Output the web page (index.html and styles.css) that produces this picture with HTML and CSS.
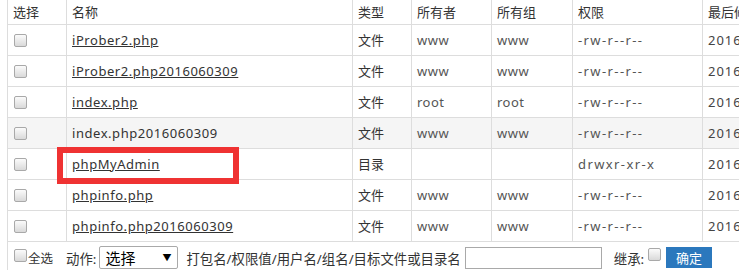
FILE: index.html
```html
<!DOCTYPE html>
<html lang="zh-CN">
<head>
<meta charset="utf-8">
<title>文件列表</title>
<link rel="stylesheet" href="styles.css">
</head>
<body>
<div class="wrap">
<table class="files">
  <colgroup>
    <col class="c-sel"><col class="c-name"><col class="c-type"><col class="c-owner"><col class="c-group"><col class="c-perm"><col class="c-time">
  </colgroup>
  <thead>
    <tr><th>选择</th><th>名称</th><th>类型</th><th>所有者</th><th>所有组</th><th>权限</th><th>最后修改时间</th></tr>
  </thead>
  <tbody>
    <tr><td><input type="checkbox" class="cb"></td><td><a href="#" class="fn">iProber2.php</a></td><td>文件</td><td class="usr">www</td><td class="usr">www</td><td class="perm">-rw-r--r--</td><td class="num">2016-06-03</td></tr>
    <tr><td><input type="checkbox" class="cb"></td><td><a href="#" class="fn">iProber2.php2016060309</a></td><td>文件</td><td class="usr">www</td><td class="usr">www</td><td class="perm">-rw-r--r--</td><td class="num">2016-06-03</td></tr>
    <tr><td><input type="checkbox" class="cb"></td><td><a href="#" class="fn">index.php</a></td><td>文件</td><td class="usr">root</td><td class="usr">root</td><td class="perm">-rw-r--r--</td><td class="num">2016-06-03</td></tr>
    <tr class="hover"><td><input type="checkbox" class="cb"></td><td><span class="fn plain">index.php2016060309</span></td><td>文件</td><td class="usr">www</td><td class="usr">www</td><td class="perm">-rw-r--r--</td><td class="num">2016-06-03</td></tr>
    <tr><td><input type="checkbox" class="cb"></td><td class="mark-cell"><a href="#" class="fn">phpMyAdmin</a><span class="mark"></span></td><td>目录</td><td class="usr"></td><td class="usr"></td><td class="perm">drwxr-xr-x</td><td class="num">2016-06-03</td></tr>
    <tr><td><input type="checkbox" class="cb"></td><td><a href="#" class="fn">phpinfo.php</a></td><td>文件</td><td class="usr">www</td><td class="usr">www</td><td class="perm">-rw-r--r--</td><td class="num">2016-06-03</td></tr>
    <tr><td><input type="checkbox" class="cb"></td><td><a href="#" class="fn">phpinfo.php2016060309</a></td><td>文件</td><td class="usr">www</td><td class="usr">www</td><td class="perm">-rw-r--r--</td><td class="num">2016-06-03</td></tr>
  </tbody>
  <tfoot>
    <tr>
      <td colspan="7" class="foot">
        <div class="actions">
          <label class="all"><input type="checkbox" class="cb">全选</label>
          <span class="act-label">动作:</span>
          <span class="sel-wrap"><select class="sel"><option>选择</option></select></span>
          <span class="hint">打包名/权限值/用户名/组名/目标文件或目录名</span>
          <input type="text" class="txt">
          <span class="inherit">继承:</span>
          <input type="checkbox" class="cb">
          <button class="btn" type="button">确定</button>
        </div>
      </td>
    </tr>
  </tfoot>
</table>
</div>
</body>
</html>
```

FILE: styles.css
```css
html, body {
  margin: 0;
  padding: 0;
  background: #fff;
  overflow: hidden;
}
body {
  font-family: "Noto Sans", "Noto Sans CJK SC", sans-serif;
  font-size: 13px;
  color: #333;
}
.wrap {
  padding-left: 7px;
  width: 900px;
  margin-top: -1px;
}
.files {
  border-collapse: collapse;
  table-layout: fixed;
  width: 860px;
  border: 1px solid #ddd;
}
.c-sel { width: 59px; }
.c-name { width: 286px; }
.c-type { width: 59px; }
.c-owner { width: 80px; }
.c-group { width: 81px; }
.c-perm { width: 130px; }
.c-time { width: 165px; }

.files th,
.files td {
  border: 1px solid #ddd;
  padding: 0 5px;
  text-align: left;
  white-space: nowrap;
  overflow: hidden;
  vertical-align: middle;
}
.files th {
  font-weight: normal;
  height: 23px;
  line-height: 20px;
  font-size: 13px;
  padding-bottom: 1px;
}
.files tbody td {
  height: 30px;
  line-height: 20px;
}
.hover td {
  background: #f5f5f5;
}
.fn {
  color: #333;
  text-decoration: underline;
  letter-spacing: 0.55px;
}
.fn.plain {
  text-decoration: none;
}
.usr {
  color: #555;
  letter-spacing: 0.5px;
}
.perm {
  color: #555;
  letter-spacing: 1.4px;
}
.num {
  color: #444;
  letter-spacing: 1px;
}

.cb {
  -webkit-appearance: none;
  appearance: none;
  width: 13px;
  height: 13px;
  margin: 0;
  border: 1px solid #a9a9a9;
  border-radius: 2px;
  background: linear-gradient(#fbfbfb, #d9d9d9);
  vertical-align: middle;
  box-sizing: border-box;
  display: inline-block;
  position: relative;
  top: -1px;
}
.files tbody td .cb {
  margin-left: 1px;
}

.mark-cell {
  position: relative;
  overflow: visible !important;
}
.mark {
  position: absolute;
  left: -10px;
  top: -2px;
  width: 182px;
  height: 37px;
  border: 6px solid #ef3232;
  box-sizing: border-box;
}

.files td.foot {
  height: 29px;
  padding: 0 0 0 5px;
  vertical-align: top;
  border-bottom: none;
}
.actions {
  display: flex;
  align-items: center;
  height: 23px;
  margin-top: 4px;
  font-size: 13.4px;
  color: #333;
}
.all {
  display: flex;
  align-items: center;
  font-size: 12.5px;
  margin-left: 1px;
}
.all .cb {
  top: -2px;
  margin-right: 1px;
}
.act-label {
  margin-left: 13px;
}
.sel-wrap {
  position: relative;
  margin-left: 3px;
  display: inline-block;
}
.sel {
  -webkit-appearance: none;
  appearance: none;
  width: 79px;
  height: 23px;
  border: 1px solid #a9a9a9;
  border-radius: 2px;
  background: #fff;
  font-family: "Noto Sans CJK SC", "Noto Sans", sans-serif;
  font-size: 15px;
  color: #000;
  padding: 0 0 0 5px;
  margin: 0;
  display: block;
}
.sel-wrap::after {
  content: "▼";
  position: absolute;
  right: 7px;
  top: 5px;
  font-size: 9px;
  color: #000;
  pointer-events: none;
}
.hint {
  margin-left: 8px;
}
.txt {
  margin: 0 0 0 4px;
  width: 137px;
  height: 22px;
  border: 1px solid #a9a9a9;
  box-sizing: border-box;
  padding: 0;
}
.inherit {
  margin-left: 12px;
}
.inherit + .cb {
  margin-left: 4px;
  top: -3px;
}
.btn {
  margin-left: 5px;
  width: 46px;
  height: 21px;
  border: none;
  background: #2b78bd;
  color: #fff;
  font-family: "Noto Sans CJK SC", sans-serif;
  font-size: 13px;
  padding: 0;
  line-height: 21px;
}
```
